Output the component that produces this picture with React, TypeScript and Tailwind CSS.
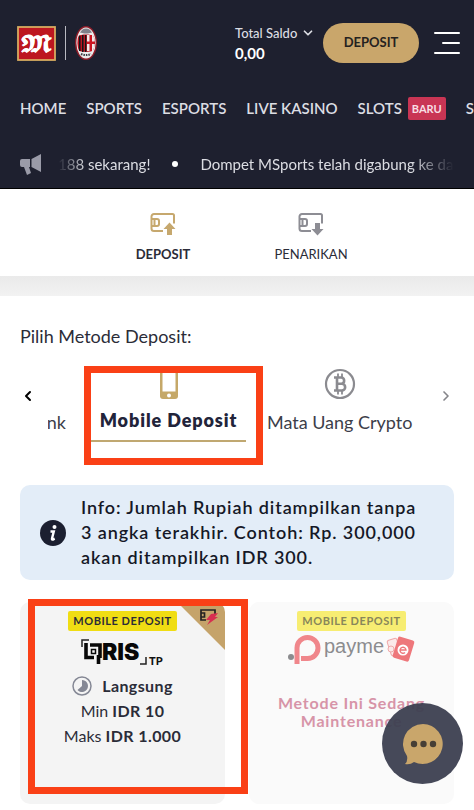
import { ChevronDown, ChevronLeft, ChevronRight } from "lucide-react"

const navItems = [
  { label: "HOME" },
  { label: "SPORTS" },
  { label: "ESPORTS" },
  { label: "LIVE KASINO" },
  { label: "SLOTS", badge: "BARU" },
  { label: "SOSIAL" },
]

const ClubCrest = () => (
  <svg viewBox="0 0 22 34" className="h-[34px] w-[22px]" aria-label="AC Milan">
    <defs>
      <clipPath id="crest">
        <ellipse cx="11" cy="17" rx="8.6" ry="14" />
      </clipPath>
    </defs>
    <ellipse cx="11" cy="17" rx="11" ry="17" fill="#8f1d2a" />
    <ellipse cx="11" cy="17" rx="9.6" ry="15.4" fill="#ececec" />
    <path d="M5 7c1-2.500 3-4.500 6-4.500s5 2 6 4.500c-2-.8-3 .6-6 .6S7 6.200 5 7Z" fill="#80808a" />
    <path d="M2 10c5-2 13-2 18 0v14c-5 2.500-13 2.500-18 0Z" fill="#b71522" clipPath="url(#crest)" />
    <path d="M4 10h1.500v15H4zM7 9h1.500v17H7zM10 9h1.300v17H10z" fill="#151519" />
    <path d="M12 9h8v16h-8z" fill="#f1e9e9" clipPath="url(#crest)" />
    <path d="M14.500 9h2.500v16h-2.500zM12 15.500h8v2.500h-8z" fill="#cc1522" />
    <path d="M6 28q5 2.200 10 0" fill="none" stroke="#3a3a42" strokeWidth="2" strokeDasharray="1.500 1" />
  </svg>
)

const TransferIcon = ({ down = false }: { down?: boolean }) => (
  <svg viewBox="0 0 26 24" className="h-6 w-[26px]" fill="none" stroke="currentColor" strokeWidth="2">
    <path d="M13 19H4a2.500 2.500 0 0 1-2.500-2.500v-12A2.500 2.500 0 0 1 4 2h18.500A1.500 1.500 0 0 1 24 3.500v8" />
    <path d="M2 7h5a2 2 0 0 1 2 2v3a2 2 0 0 1-2 2H2M4.500 7v7" />
    {down ? (
      <path d="M17 11h5v6h3.500l-6 6.500-6-6.500H17z" fill="currentColor" stroke="none" />
    ) : (
      <path d="M17 23h5v-6h3.500l-6-6.500-6 6.500H17z" fill="currentColor" stroke="none" />
    )}
  </svg>
)

const MegaphoneIcon = () => (
  <svg viewBox="0 0 22 21" className="h-[21px] w-[22px] shrink-0" fill="#9a9ba8">
    <path d="M0 7q0-2 2-2h8v8H9l2 6-4 2L4 13H2q-2 0-2-2ZM11.500 5 21 0v18l-9.500-5Z" />
  </svg>
)

const PhoneIcon = () => (
  <svg viewBox="0 0 20 32" className="h-8 w-5">
    <rect x="1" y="1" width="18" height="30" rx="3" fill="#c5a868" />
    <path d="M3.500 5h13v18.500h-13z" fill="#fff" />
    <circle cx="10" cy="27.500" r="2" fill="#fff" />
  </svg>
)

const BitcoinIcon = () => (
  <svg viewBox="0 0 32 32" className="size-8" fill="none" stroke="#8b8b90">
    <circle cx="16" cy="16" r="14" strokeWidth="2.200" />
    <path d="M10 9.500h7.500a3.200 3.200 0 0 1 0 6.300H13m4.800 0a3.300 3.300 0 0 1 0 6.700H10M13 9.500v13" strokeWidth="2.600" />
    <path d="M14 5.500v4M18 5.500v4M14 22.500v4M18 22.500v4" strokeWidth="1.800" />
  </svg>
)

const InfoIcon = () => (
  <svg viewBox="0 0 26 26" className="size-[26px] shrink-0">
    <circle cx="13" cy="13" r="13" fill="#1b1f30" />
    <circle cx="14.500" cy="7" r="2" fill="#fff" />
    <path d="M10.500 11.500h3.300L12 18.500q-.3 1.300 1 1l1.700-.8" fill="none" stroke="#fff" strokeWidth="2.400" />
  </svg>
)

const QrisLogo = () => (
  <svg viewBox="0 0 84 28" className="h-7 w-[84px]" aria-label="QRIS TP">
    <path d="M1 8V1h7M59 25h6v-7" fill="none" stroke="#222" strokeWidth="1.500" />
    <path d="M5 4v14.500h8M9 6h10v13M17.500 16v9" fill="none" stroke="#080808" strokeWidth="3.600" />
    <path d="M10.500 10.500h4v4h-4z" fill="none" stroke="#080808" strokeWidth="1.500" />
    <text x="21" y="21" fontSize="23" fontWeight="900" fill="#080808" className="font-['Inter',sans-serif]">RIS</text>
    <text x="68" y="26" fontSize="11" fontWeight="900" fill="#111" className="font-['Lato',sans-serif]">TP</text>
  </svg>
)

const PaymeLogo = () => (
  <svg viewBox="0 0 130 32" className="h-8 w-[130px]" aria-label="payme">
    <circle cx="4" cy="22" r="3" fill="#8b8b8e" />
    <path d="M10 29V13a10.500 10.500 0 1 1 10.500 10.500H14" fill="none" stroke="#f0868b" strokeWidth="5" />
    <text x="37" y="18" fontSize="20" fill="#8c8c8f" className="font-['Liberation_Sans',sans-serif]">payme</text>
    <g fill="#fbe9e9" stroke="#efa9aa">
      <rect x="102" y="4" width="10" height="16" rx="2" transform="rotate(-18 107 12)" />
      <circle cx="104" cy="14" r="3" />
    </g>
    <rect x="108" y="3" width="17" height="22" rx="2" fill="#ee777b" transform="rotate(17 116 14)" />
    <circle cx="116" cy="15" r="5.500" fill="#fff" />
    <path d="M113 15h6a3 3 0 1 0-1 2.500" fill="none" stroke="#ee777b" strokeWidth="1.400" />
  </svg>
)

const InstantCorner = () => (
  <svg viewBox="0 0 44 44" className="absolute top-1 right-0 size-11">
    <path d="M0 0h44v44z" fill="#c5a36a" />
    <path d="M25 14h-5V4h14v4M20 7h3.500v4H20" fill="none" stroke="#222" strokeWidth="1.700" />
    <path d="m30 8 7-1-3 4h3L26 19l3-5h-4z" fill="#d72f50" />
  </svg>
)

const ClockIcon = () => (
  <svg viewBox="0 0 20 20" className="size-5">
    <circle cx="10" cy="10" r="9" fill="none" stroke="#858895" strokeWidth="1.500" />
    <path d="M10 4a6 6 0 1 1-4.500 10L10 10Z" fill="#858895" />
  </svg>
)

const Header = () => (
  <header className="border-b border-black bg-[#1e202f] text-[#dcdde3]">
    <div className="flex h-[86px] items-center pr-3.5 pl-[17px]">
      <div className="flex items-center gap-[9px]">
        <svg viewBox="0 0 39 35" className="h-[35px] w-[39px]" aria-label="M88">
          <rect x="1" y="1" width="37" height="33" fill="#bd1720" stroke="#d6ab60" strokeWidth="1.800" />
          <text x="19.500" y="25" textAnchor="middle" fontSize="21" fontWeight="700" fill="#fff" stroke="#fff" strokeWidth=".6" className="font-['DejaVu_Math_TeX_Gyre','DejaVu_Serif',serif]">𝕸</text>
        </svg>
        <div className="h-[34px] w-px bg-[#b9bac2]" />
        <ClubCrest />
      </div>
      <div className="ml-auto w-[88px]">
        <button type="button" className="flex items-center gap-1 text-[13px] leading-5 font-medium whitespace-nowrap">
          Total Saldo
          <ChevronDown className="size-3.5 shrink-0" strokeWidth={3} />
        </button>
        <div className="text-[15px] leading-5 font-bold text-white">0,00</div>
      </div>
      <button type="button" className="h-10 w-24 rounded-full bg-[#c9a66b] text-[13px] font-bold text-[#25221f]">
        DEPOSIT
      </button>
      <button type="button" aria-label="Menu" className="ml-[15px] flex w-[26px] flex-col items-end gap-2">
        <span className="h-0.5 w-full rounded-full bg-white" />
        <span className="h-0.5 w-[18px] rounded-full bg-white" />
        <span className="h-0.5 w-full rounded-full bg-white" />
      </button>
    </div>

    <nav className="flex h-11 items-center gap-5 overflow-hidden pl-5 text-[15px] font-semibold">
      {navItems.map((item) => (
        <a key={item.label} href="#" className="flex shrink-0 items-center gap-1.5">
          {item.label}
          {item.badge && (
            <span className="rounded-xs bg-[#c93554] px-1 text-[11px] leading-[23px] font-bold text-[#f8dfe5]">{item.badge}</span>
          )}
        </a>
      ))}
    </nav>

    <div className="flex items-center gap-4 pt-[22px] pr-5 pb-3 pl-5">
      <MegaphoneIcon />
      {/* Ticker fades out at both ends */}
      <div className="flex min-w-0 flex-1 items-center gap-[22px] overflow-hidden text-[15px] leading-6 whitespace-nowrap [mask-image:linear-gradient(to_right,transparent,black_28px,black_calc(100%-44px),transparent)]">
        <span>188 sekarang!</span>
        <span className="size-1.5 shrink-0 rounded-full bg-white" />
        <span>Dompet MSports telah digabung ke dalam</span>
      </div>
    </div>
  </header>
)

const MethodPicker = () => (
  <div className="mt-5 flex items-start justify-between">
    <button type="button" aria-label="Sebelumnya" className="pt-5">
      <ChevronLeft className="size-4 text-black" strokeWidth={3} />
    </button>
    <div className="flex min-w-0 flex-1 pl-3 text-lg leading-6 text-[#3c3e4a]">
      <button type="button" className="flex w-[18px] shrink-0 justify-end overflow-hidden pt-[42px]">Bank</button>
      {/* Active method, ringed by the guide marker */}
      <div className="relative mr-[21px] ml-[25px] shrink-0">
        <button type="button" className="flex w-[155px] flex-col items-center border-b-2 border-[#c0a871] pb-2 font-extrabold text-[#22243a]">
          <PhoneIcon />
          <span className="mt-2 tracking-wider">Mobile Deposit</span>
        </button>
        <div className="pointer-events-none absolute -top-0.5 -right-[17px] -bottom-[23px] -left-[7px] border-7 border-[#fa4016]" />
      </div>
      <button type="button" className="flex shrink-0 flex-col items-center">
        <BitcoinIcon />
        <span className="mt-2.5">Mata Uang Crypto</span>
      </button>
    </div>
    <button type="button" aria-label="Berikutnya" className="pt-5">
      <ChevronRight className="size-4 text-[#85858a]" strokeWidth={2.5} />
    </button>
  </div>
)

export default function App() {
  return (
    <div className="relative min-h-screen overflow-hidden bg-white font-['Lato',sans-serif] text-[#2b2c38]">
      <Header />

      <div className="flex justify-center pt-[23px] pb-3 text-[13px] leading-5">
        <button type="button" className="flex w-[148px] flex-col items-center gap-2 font-bold">
          <span className="text-[#c6a86e]"><TransferIcon /></span>
          DEPOSIT
        </button>
        <button type="button" className="flex w-[148px] flex-col items-center gap-2">
          <span className="text-[#8d8d94]"><TransferIcon down /></span>
          PENARIKAN
        </button>
      </div>
      <div className="h-5 bg-linear-to-b from-[#eaeaea] to-[#f2f2f2]" />

      <main className="px-5 pt-7">
        <h2 className="text-lg leading-6">Pilih Metode Deposit:</h2>
        <MethodPicker />

        <div className="mt-[43px] flex items-center gap-[15px] rounded-[10px] bg-[#e3edf8] py-[10px] pr-7 pl-5 text-[#151827]">
          <InfoIcon />
          <p className="text-lg leading-[25px] font-semibold tracking-wider">
            Info: Jumlah Rupiah ditampilkan tanpa 3 angka terakhir. Contoh: Rp. 300,000 akan ditampilkan IDR 300.
          </p>
        </div>

        <div className="mt-[22px] grid grid-cols-2 gap-6 pb-2">
          <div className="relative">
            <button type="button" className="relative flex h-[202px] w-full flex-col items-center overflow-hidden rounded-[10px] bg-[#f4f4f4] pt-[9px] text-base leading-[25px]">
              <InstantCorner />
              <span className="rounded-xs bg-[#f0dd13] px-[5px] text-[11px] leading-5 font-bold tracking-wider">MOBILE DEPOSIT</span>
              <span className="mt-2"><QrisLogo /></span>
              <span className="mt-1.5 flex items-center gap-2.5 font-bold tracking-wide">
                <ClockIcon />
                Langsung
              </span>
              <span>Min <b className="tracking-wide">IDR 10</b></span>
              <span>Maks <b className="tracking-wide">IDR 1.000</b></span>
            </button>
            <div className="pointer-events-none absolute -top-[3px] -right-[23px] bottom-2.5 left-2 border-7 border-[#fa4016]" />
          </div>

          <button type="button" disabled className="flex h-[202px] flex-col items-center rounded-[10px] bg-[#fafafa] pt-[9px]">
            <span className="rounded-xs bg-[#f7ed72] px-[5px] text-[11px] leading-5 font-bold tracking-wider text-[#88865a]">MOBILE DEPOSIT</span>
            <span className="mt-1"><PaymeLogo /></span>
            <span className="mt-[27px] w-40 text-base leading-[18px] font-bold tracking-wider text-[#d794a8]">Metode Ini Sedang Maintenance</span>
          </button>
        </div>
      </main>

      <button type="button" aria-label="Chat" className="fixed right-[11px] bottom-[26px] flex size-[81px] items-center justify-center rounded-full bg-[#3c3f50]/95">
        <svg viewBox="0 0 42 42" className="size-[42px]">
          <path d="M21 1a20 20 0 1 1-9 38q-4 3-9 2 3-3 2-8A20 20 0 0 1 21 1Z" fill="#c9a66b" />
          <g fill="#463f36">
            <circle cx="12" cy="21" r="3.200" />
            <circle cx="21.500" cy="21" r="3.200" />
            <circle cx="31" cy="21" r="3.200" />
          </g>
        </svg>
      </button>
    </div>
  )
}
